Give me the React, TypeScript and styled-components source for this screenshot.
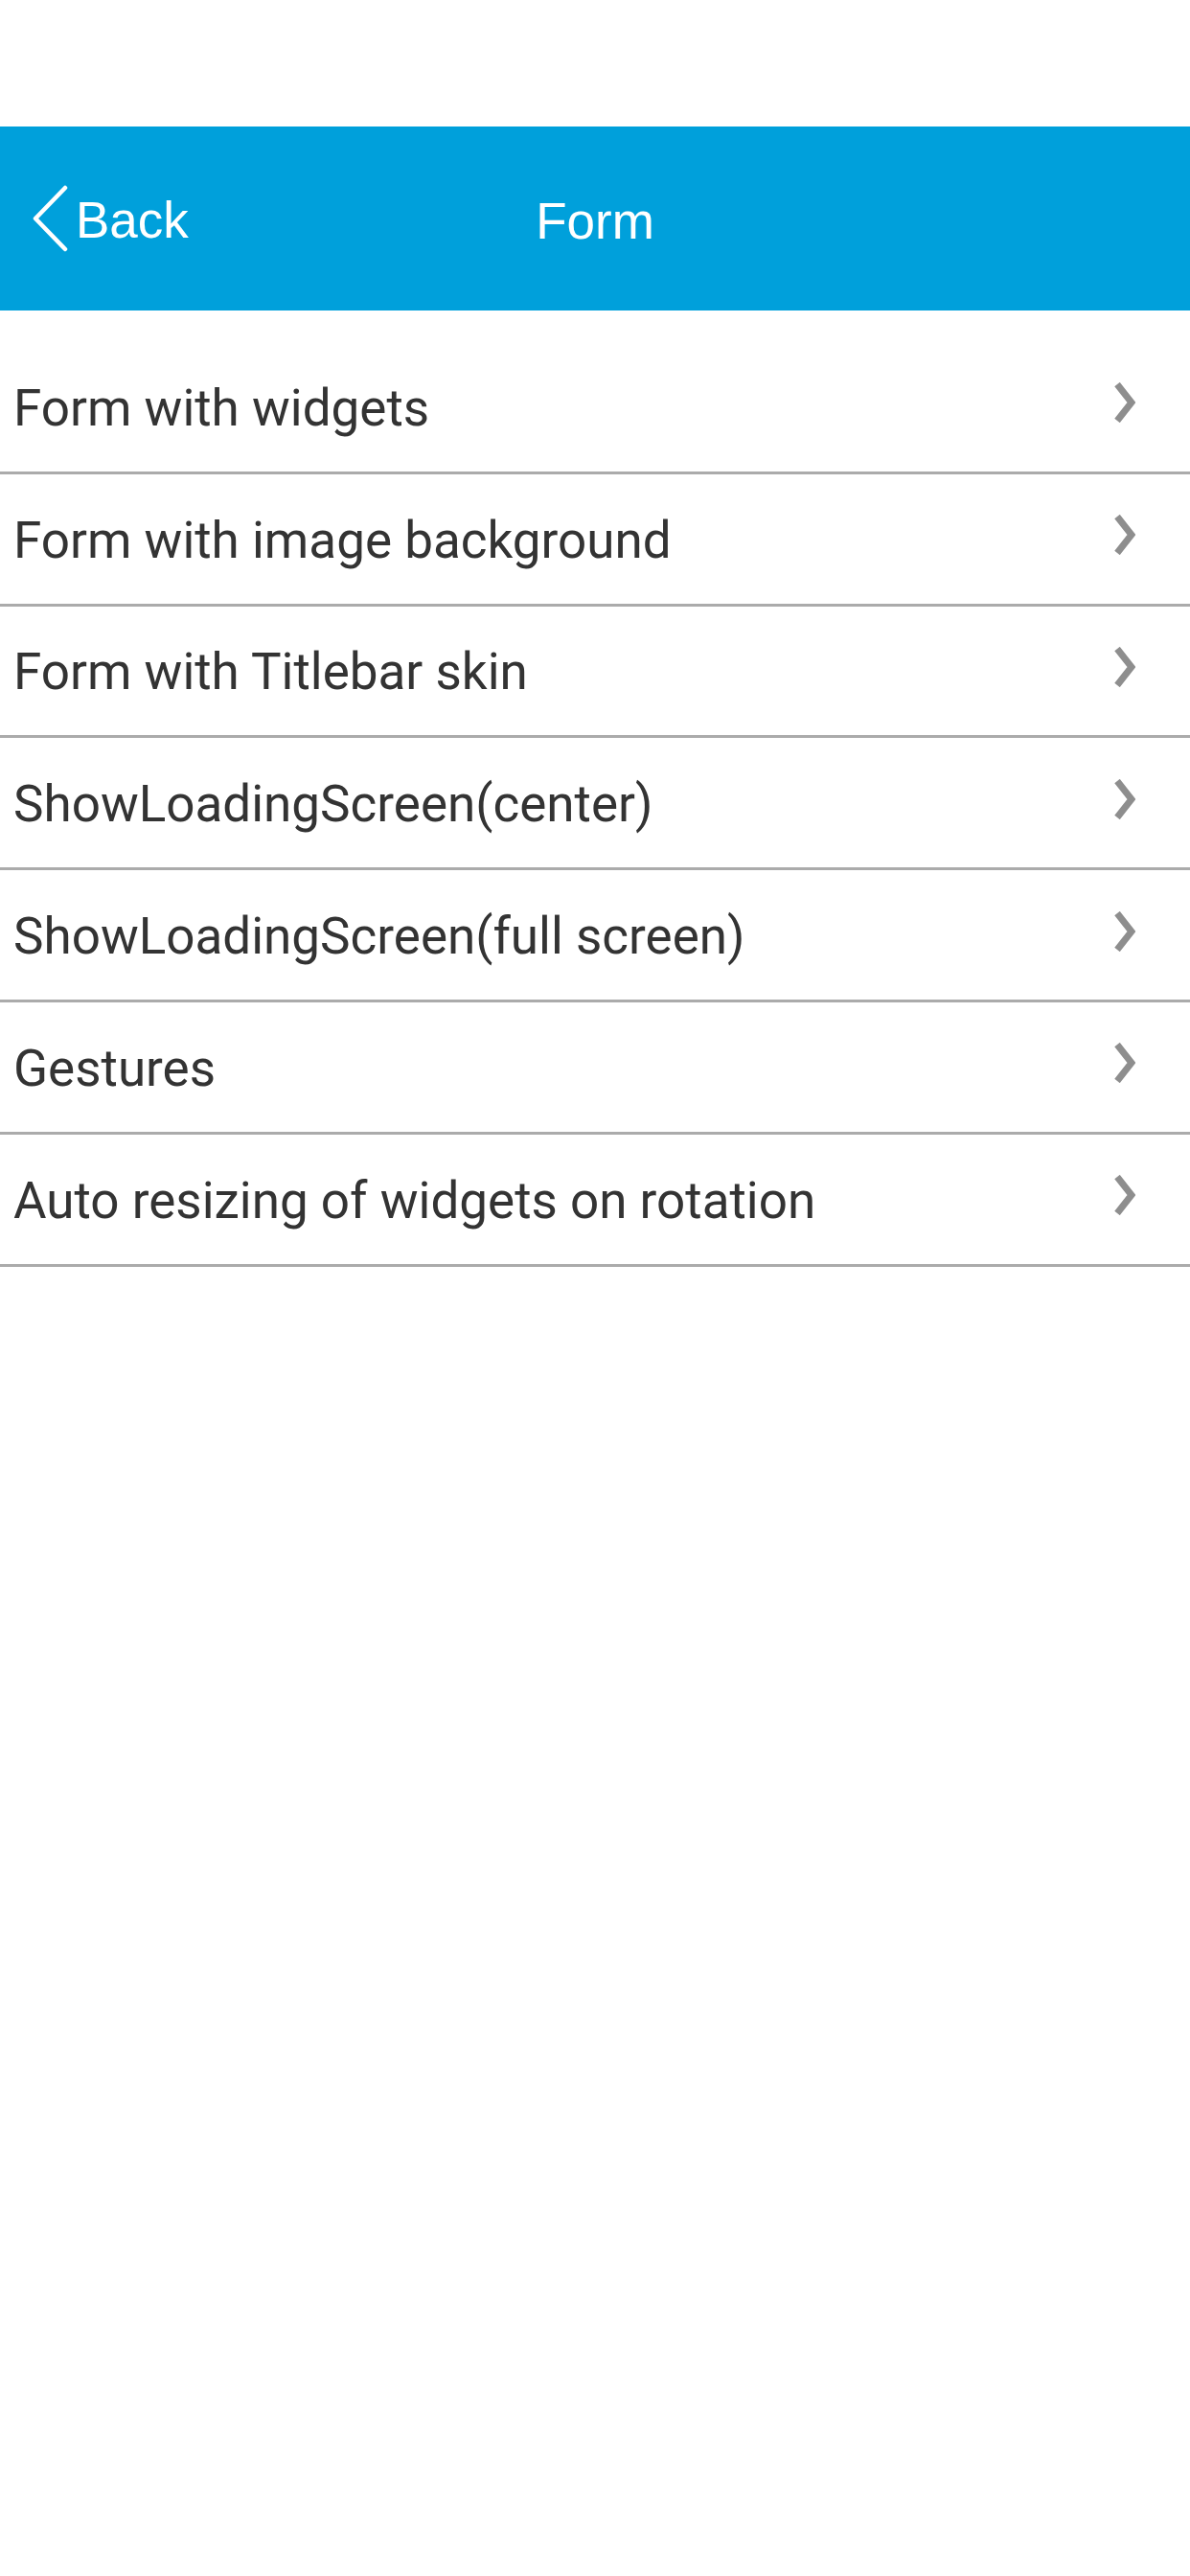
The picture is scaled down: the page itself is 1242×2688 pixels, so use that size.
import React from "react";
import styled, { createGlobalStyle } from "styled-components";

const Global = createGlobalStyle`
  html, body { margin: 0; padding: 0; background: #ffffff; }
  body { font-family: Roboto, "Liberation Sans", Arial, sans-serif; }
`;

const Page = styled.div`
  width: 1242px;
  min-height: 2688px;
  background: #ffffff;
  display: flex;
  flex-direction: column;
`;

const StatusSpace = styled.div`
  height: 132px;
  flex-shrink: 0;
`;

const Header = styled.header`
  height: 192px;
  background: #00a0db;
  display: grid;
  grid-template-columns: 1fr auto 1fr;
  align-items: center;
  color: #ffffff;
  font-family: "Liberation Sans", Arial, sans-serif;
`;

const BackButton = styled.button`
  justify-self: start;
  display: flex;
  align-items: center;
  gap: 6px;
  margin-left: 33px;
  padding: 0;
  border: none;
  background: transparent;
  color: #ffffff;
  font-family: "Liberation Sans", Arial, sans-serif;
  font-size: 53px;
  cursor: pointer;
`;

const BackLabel = styled.span`
  line-height: 1;
  padding-top: 2px;
`;

const Title = styled.h1`
  margin: 0;
  font-weight: 400;
  font-size: 53px;
  line-height: 1;
  padding-top: 4px;
`;

const List = styled.ul`
  list-style: none;
  margin: 33px 0 0;
  padding: 0;
`;

const Row = styled.li`
  box-sizing: border-box;
  height: 137.8px;
  border-bottom: 3px solid #ababab;
  display: flex;
  align-items: center;
  justify-content: space-between;
  padding: 0 57px 0 14px;
`;

const RowLabel = styled.span`
  font-size: 53px;
  color: #333333;
  line-height: 1;
  padding-top: 4px;
`;

const ChevronIcon = styled.svg`
  width: 22px;
  height: 42px;
  margin-top: -8px;
  flex-shrink: 0;
`;

const items = [
  "Form with widgets",
  "Form with image background",
  "Form with Titlebar skin",
  "ShowLoadingScreen(center)",
  "ShowLoadingScreen(full screen)",
  "Gestures",
  "Auto resizing of widgets on rotation",
];

const Chevron = () => (
  <ChevronIcon viewBox="0 0 22 42">
    <polyline
      points="3,2 18,21 3,40"
      fill="none"
      stroke="#8e8e8e"
      strokeWidth="7"
      strokeLinejoin="miter"
    />
  </ChevronIcon>
);

export default function App() {
  return (
    <Page>
      <Global />
      <StatusSpace />
      <Header>
        <BackButton>
          <svg width="40" height="72" viewBox="0 0 40 72">
            <polyline
              points="35,4 4,36 35,68"
              fill="none"
              stroke="#ffffff"
              strokeWidth="4.5"
              strokeLinecap="round"
              strokeLinejoin="round"
            />
          </svg>
          <BackLabel>Back</BackLabel>
        </BackButton>
        <Title>Form</Title>
        <div />
      </Header>
      <List>
        {items.map((t) => (
          <Row key={t}>
            <RowLabel>{t}</RowLabel>
            <Chevron />
          </Row>
        ))}
      </List>
    </Page>
  );
}
